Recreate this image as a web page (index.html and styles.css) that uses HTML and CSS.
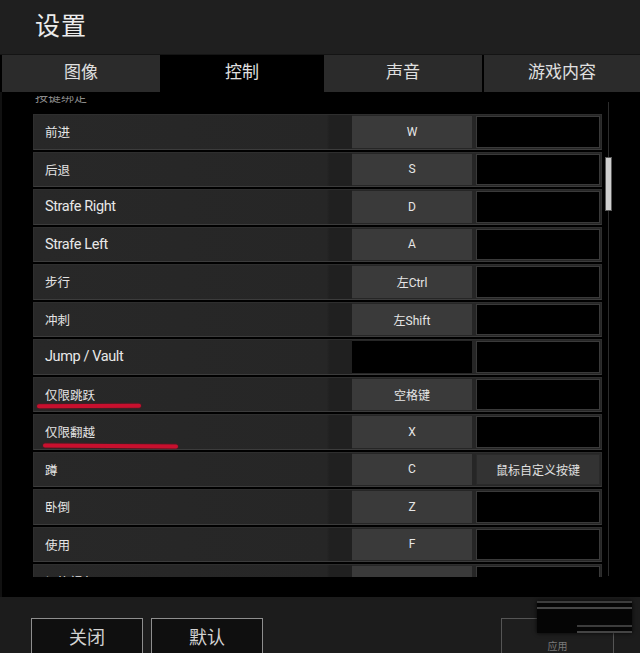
FILE: index.html
```html
<!DOCTYPE html>
<html lang="zh-CN">
<head>
<meta charset="utf-8">
<title>设置</title>
<link rel="stylesheet" href="styles.css">
</head>
<body>
<div class="app">
  <header class="header"><h1 class="title">设置</h1></header>
  <nav class="tabs">
    <div class="tab">图像</div>
    <div class="tab active">控制</div>
    <div class="tab">声音</div>
    <div class="tab">游戏内容</div>
  </nav>
  <main class="panel">
    <div class="viewport">
      <div class="section-title">按键绑定</div>
      <div class="list">
        <div class="row"><div class="label cjk">前进</div><div class="key">W</div><div class="key2"></div></div>
        <div class="row"><div class="label cjk">后退</div><div class="key">S</div><div class="key2"></div></div>
        <div class="row"><div class="label en">Strafe Right</div><div class="key">D</div><div class="key2"></div></div>
        <div class="row"><div class="label en">Strafe Left</div><div class="key">A</div><div class="key2"></div></div>
        <div class="row"><div class="label cjk">步行</div><div class="key">左Ctrl</div><div class="key2"></div></div>
        <div class="row"><div class="label cjk">冲刺</div><div class="key">左Shift</div><div class="key2"></div></div>
        <div class="row"><div class="label en">Jump / Vault</div><div class="key empty"></div><div class="key2"></div></div>
        <div class="row"><div class="label cjk">仅限跳跃<span class="mark mark-a"></span></div><div class="key">空格键</div><div class="key2"></div></div>
        <div class="row"><div class="label cjk">仅限翻越<span class="mark mark-b"></span></div><div class="key">X</div><div class="key2"></div></div>
        <div class="row"><div class="label cjk">蹲</div><div class="key">C</div><div class="key2 filled">鼠标自定义按键</div></div>
        <div class="row"><div class="label cjk">卧倒</div><div class="key">Z</div><div class="key2"></div></div>
        <div class="row"><div class="label cjk">使用</div><div class="key">F</div><div class="key2"></div></div>
        <div class="row"><div class="label cjk">切换视角</div><div class="key">V</div><div class="key2"></div></div>
      </div>
    </div>
    <div class="scrollbar"><div class="thumb"></div></div>
  </main>
  <footer class="footer">
    <button class="btn">关闭</button>
    <button class="btn">默认</button>
    <span class="spacer"></span>
    <button class="btn btn-apply">应用</button>
    <div class="smear">
      <span class="smear-line l1"></span>
      <span class="smear-line l2"></span>
      <span class="smear-line l3"></span>
      <span class="smear-line l4"></span>
    </div>
  </footer>
</div>
</body>
</html>
```
FILE: styles.css
```css
* { box-sizing: border-box; }
html, body { margin: 0; padding: 0; background: #000; }
body {
  width: 640px;
  height: 653px;
  overflow: hidden;
  font-family: Roboto, "Noto Sans CJK SC", sans-serif;
  color: #e2e2e2;
}
.app { width: 640px; height: 653px; display: flex; flex-direction: column; }

.header {
  flex: 0 0 55px;
  height: 55px;
  background: #1f1f1f;
  border-bottom: 1px solid #141414;
  padding-left: 35px;
  display: flex;
  align-items: center;
}
.title {
  margin: 0;
  font-family: "Noto Sans CJK SC", sans-serif;
  font-size: 25px;
  font-weight: 400;
  color: #ececec;
  letter-spacing: 1px;
  line-height: 1;
  margin-top: -6px;
}

.tabs {
  flex: 0 0 37px;
  height: 37px;
  display: grid;
  grid-template-columns: 158px 160px 158px 156px;
  gap: 2px;
  padding-left: 2px;
  background: #000;
}
.tab {
  background: #2b2b2b;
  display: flex;
  align-items: center;
  justify-content: center;
  font-family: "Noto Sans CJK SC", sans-serif;
  font-size: 17px;
  color: #e0e0e0;
  padding-bottom: 6px;
}
.tab.active { background: #000; }

.panel {
  flex: 0 0 505px;
  height: 505px;
  display: flex;
  align-items: flex-start;
  background: #000;
  border-left: 2px solid #111;
  padding-left: 31px;
  padding-top: 4px;
}
.viewport {
  width: 569px;
  height: 481px;
  overflow: hidden;
}
.section-title {
  height: 16px;
  margin-top: -8px;
  padding-left: 2px;
  font-family: "Noto Sans CJK SC", sans-serif;
  font-size: 13px;
  line-height: 16px;
  color: #8a8a8a;
  margin-bottom: 10px;
}
.list { display: flex; flex-direction: column; gap: 2px; }
.row {
  height: 35.5px;
  display: flex;
  align-items: stretch;
  background: #262626;
  border: 1px solid #2e2e2e;
  border-bottom-color: #3c3c3c;
}
.label {
  flex: 1;
  position: relative;
  display: flex;
  align-items: center;
  padding-left: 11px;
  background: linear-gradient(to right, #282828 0%, #262626 92%, #202020 93%);
}
.label.cjk {
  font-family: "Noto Sans CJK SC", sans-serif;
  font-size: 12.5px;
  color: #e4e4e4;
}
.label.en {
  font-family: Roboto, sans-serif;
  font-size: 14.5px;
  color: #e8e8e8;
  letter-spacing: -0.4px;
}
.key {
  width: 120px;
  margin: 1px 0;
  background: #3a3a3a;
  display: flex;
  align-items: center;
  justify-content: center;
  font-family: Roboto, "Noto Sans CJK SC", sans-serif;
  font-size: 12px;
  color: #e6e6e6;
}
.key.empty { background: #000; }
.key2 {
  width: 124px;
  margin: 1px 1px 1px 4px;
  background: #000;
  border: 1px solid #3a3a3a;
  display: flex;
  align-items: center;
  justify-content: center;
  font-family: "Noto Sans CJK SC", sans-serif;
  font-size: 12px;
  color: #e0e0e0;
}
.key2.filled { background: #333; border-color: #2a2a2a; }

.mark {
  position: absolute;
  height: 4px;
  border-radius: 3px;
  background: #c8102e;
  box-shadow: 0 0 2px #8a0a20;
}
.mark-a { left: 3px; width: 104px; bottom: 3px; transform: rotate(-0.4deg); }
.mark-b { left: 9px; width: 135px; bottom: 1px; transform: rotate(0.4deg); }

.scrollbar {
  position: relative;
  width: 7px;
  height: 474px;
  margin-left: 3px;
  margin-top: 6px;
  display: flex;
  justify-content: center;
}
.scrollbar::before {
  content: "";
  width: 1px;
  height: 100%;
  background: #2c2c2c;
}
.thumb {
  position: absolute;
  left: 0;
  top: 55px;
  width: 7px;
  height: 54px;
  background: #cfcfcf;
  border: 1px solid #5a5a5a;
}

.footer {
  position: relative;
  flex: 1 1 0;
  min-height: 0;
  overflow: hidden;
  background: #1c1c1c;
  display: flex;
  align-items: flex-start;
  gap: 8px;
  padding: 21px 26px 0 31px;
}
.spacer { flex: 1; }
.btn {
  flex: 0 0 auto;
  width: 112px;
  height: 40px;
  background: #0f0f0f;
  border: 1px solid #8e8e8e;
  border-bottom: none;
  color: #d2d2d2;
  font-family: "Noto Sans CJK SC", sans-serif;
  font-size: 18px;
  padding: 0 0 6px;
  line-height: 1;
}
.btn-apply {
  width: 113px;
  background: #1e1e1e;
  border-color: #555;
  color: #7a7a7a;
  font-size: 10px;
  padding: 14px 0 0;
}
.smear {
  position: absolute;
  left: 537px;
  top: 4px;
  width: 95px;
  height: 32px;
  background: #050505;
  box-shadow: 0 0 4px #050505;
}
.smear-line { position: absolute; height: 2px; background: #3c3c3c; }
.smear-line.l1 { left: 0; right: 0; top: 0; }
.smear-line.l2 { left: 0; right: 0; top: 6px; background: #464646; }
.smear-line.l3 { left: 40px; right: 0; top: 24px; }
.smear-line.l4 { left: 40px; right: 0; top: 30px; background: #444; }
```
